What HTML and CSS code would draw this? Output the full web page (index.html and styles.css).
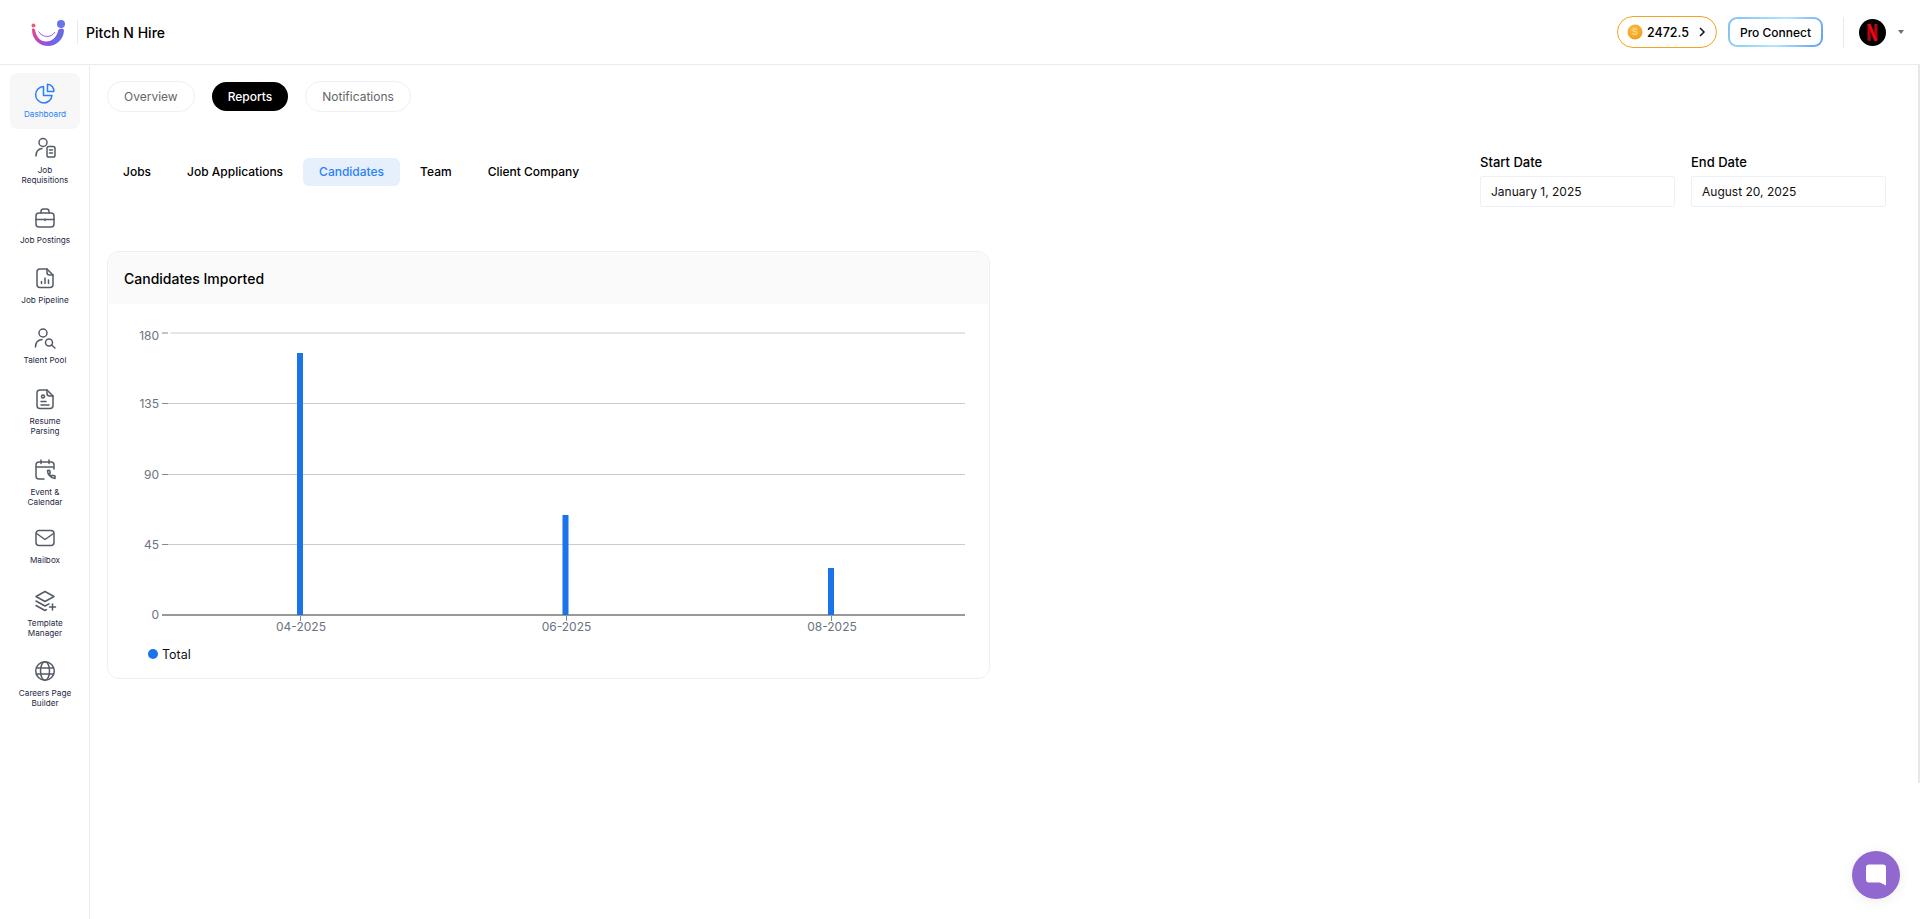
FILE: index.html
```html
<!DOCTYPE html>
<html lang="en">
<head>
<meta charset="utf-8">
<title>Pitch N Hire</title>
<link rel="stylesheet" href="styles.css">
</head>
<body>
<header class="topbar">
  <div class="brand">
    <svg class="logo" viewBox="0 0 40 32" width="40" height="32">
      <defs>
        <linearGradient id="smile" x1="0" y1="0" x2="1" y2="0.3">
          <stop offset="0" stop-color="#e8487f"/>
          <stop offset="0.5" stop-color="#a64ad8"/>
          <stop offset="1" stop-color="#5f6fe8"/>
        </linearGradient>
      </defs>
      <circle cx="4.5" cy="9.5" r="2" fill="#ee5a6f"/>
      <circle cx="32" cy="8" r="4" fill="#6a73ea"/>
      <path d="M3 13.5C3 24 11 30 19 30C27 30 34.5 24 35 14.5C35.2 12 30 11.500 29 15C27.500 21 23.500 25.500 17 25.500C11 25.500 7.500 21 6 14C5.500 12 3 12 3 13.500Z" fill="url(#smile)"/>
      <path d="M9.500 15.500C13 21.500 22 22.500 26 16" fill="none" stroke="#a35be0" stroke-width="1"/>
    </svg>
    <span class="brand-divider"></span>
    <span class="brand-name">Pitch N Hire</span>
  </div>
  <div class="top-actions">
    <button class="coins">
      <svg viewBox="0 0 16 16" width="16" height="16" class="coin-icon">
        <defs>
          <radialGradient id="coin" cx="0.4" cy="0.35" r="0.75">
            <stop offset="0" stop-color="#fbbf4a"/>
            <stop offset="1" stop-color="#f09a12"/>
          </radialGradient>
        </defs>
        <circle cx="8" cy="8" r="7.500" fill="url(#coin)"/>
        <text x="8" y="11" text-anchor="middle" class="coin-s">S</text>
      </svg>
      <span>2472.5</span>
      <svg viewBox="0 0 10 10" width="10" height="10" class="chev"><path d="M3 1l4 4-4 4" fill="none" stroke="#111" stroke-width="1.500"/></svg>
    </button>
    <button class="pro"><span class="pro-inner">Pro Connect</span></button>
    <span class="top-divider"></span>
    <svg class="avatar" viewBox="0 0 27 27" width="27" height="27">
      <circle cx="13.500" cy="13.500" r="13.500" fill="#000"/>
      <path d="M8.500 5h3.200v17l-3.200-.4zM15.300 5h3.200v16.600l-3.200.4z" fill="#b1060f"/>
      <path d="M8.500 5h3.200l6.800 16.600-3.200.4z" fill="#e50914"/>
    </svg>
    <span class="caret"></span>
  </div>
</header>

<div class="shell">
  <nav class="sidebar">
    <a class="nav-item active">
      <svg class="nav-icon" viewBox="0 0 24 24"><path d="M10.500 5.500a8.200 8.200 0 1 0 8.500 9h-8.500z"/><path d="M14.500 3.200a6.700 6.700 0 0 1 6.300 7.300h-6.300z"/></svg>
      <span>Dashboard</span>
    </a>
    <a class="nav-item">
      <svg class="nav-icon" viewBox="0 0 24 24"><circle cx="10" cy="6.500" r="4"/><path d="M3 20c0-4.500 2.500-7 6-7.500"/><rect x="14" y="10.500" width="8" height="10.500" rx="1.800"/><path d="M16.500 14h3M16.500 17h3"/></svg>
      <span>Job<br>Requisitions</span>
    </a>
    <a class="nav-item">
      <svg class="nav-icon" viewBox="0 0 24 24"><rect x="3" y="7" width="18" height="14" rx="3"/><path d="M8 7V5.500A2.500 2.500 0 0 1 10.500 3h3A2.500 2.500 0 0 1 16 5.500V7M3 13.500h18M12 13v1.500"/></svg>
      <span>Job Postings</span>
    </a>
    <a class="nav-item">
      <svg class="nav-icon" viewBox="0 0 24 24"><path d="M7 3h7l6 6v9.500a3 3 0 0 1-3 3H7a3 3 0 0 1-3-3V6a3 3 0 0 1 3-3z"/><path d="M14 3v3.500A2.500 2.500 0 0 0 16.500 9H20M8.500 17.500v-2M12 17.500V12M15.500 17.500V14"/></svg>
      <span>Job Pipeline</span>
    </a>
    <a class="nav-item">
      <svg class="nav-icon" viewBox="0 0 24 24"><circle cx="10" cy="7" r="4"/><path d="M2.500 21c0-4 2.500-7 6.500-7.500"/><circle cx="16" cy="16.500" r="3.500"/><path d="M18.500 19l3.500 3"/></svg>
      <span>Talent Pool</span>
    </a>
    <a class="nav-item">
      <svg class="nav-icon" viewBox="0 0 24 24"><path d="M7 3h7l6 6v9.500a3 3 0 0 1-3 3H7a3 3 0 0 1-3-3V6a3 3 0 0 1 3-3z"/><path d="M14 3v3.500A2.500 2.500 0 0 0 16.500 9H20M8 18h8M8 14.500h5"/><circle cx="10" cy="9.500" r="1.500"/></svg>
      <span>Resume<br>Parsing</span>
    </a>
    <a class="nav-item">
      <svg class="nav-icon" viewBox="0 0 24 24"><path d="M11 21H6a3 3 0 0 1-3-3V7a3 3 0 0 1 3-3h12a3 3 0 0 1 3 3v4M3 9h18M8 2v3.500M16 2v3.500"/><path d="M14.500 12.500c0 4 3 7.500 7.500 8v-2.500l-2.500-.8-1 1c-1-.6-1.800-1.500-2.200-2.500l1-1-.8-2.500z"/></svg>
      <span>Event &amp;<br>Calendar</span>
    </a>
    <a class="nav-item">
      <svg class="nav-icon" viewBox="0 0 24 24"><rect x="3" y="4.500" width="18" height="15" rx="3"/><path d="M3.500 7.500l8.500 6 8.500-6"/></svg>
      <span>Mailbox</span>
    </a>
    <a class="nav-item">
      <svg class="nav-icon" viewBox="0 0 24 24"><path d="M12 2.500l9 5-9 5-9-5zM3 12l9 5 4-2.200M3 16.500l9 5 1.500-.8M19.500 15v6M16.500 18h6"/></svg>
      <span>Template<br>Manager</span>
    </a>
    <a class="nav-item">
      <svg class="nav-icon" viewBox="0 0 24 24"><circle cx="12" cy="12" r="9.300"/><ellipse cx="12" cy="12" rx="4.500" ry="9.300"/><path d="M3.500 9h17M3.500 15h17"/></svg>
      <span>Careers Page<br>Builder</span>
    </a>
  </nav>

  <main class="content">
    <div class="pills">
      <a class="pill">Overview</a>
      <a class="pill selected">Reports</a>
      <a class="pill">Notifications</a>
    </div>

    <div class="filters">
      <div class="subtabs">
        <a class="subtab">Jobs</a>
        <a class="subtab">Job Applications</a>
        <a class="subtab current">Candidates</a>
        <a class="subtab">Team</a>
        <a class="subtab">Client Company</a>
      </div>
      <div class="dates">
        <div class="date-field">
          <span class="date-label">Start Date</span>
          <div class="date-input">January 1, 2025</div>
        </div>
        <div class="date-field">
          <span class="date-label">End Date</span>
          <div class="date-input">August 20, 2025</div>
        </div>
      </div>
    </div>

    <section class="card">
      <h2 class="card-title">Candidates Imported</h2>
      <svg class="chart" viewBox="0 0 881 374" width="881" height="374">
        <g class="grid">
          <path d="M62.500 29H857"/>
          <path d="M54 99.500H857"/>
          <path d="M54 170.500H857"/>
          <path d="M54 240.500H857"/>
        </g>
        <g class="ticks">
          <path d="M54 29h6M54 99.500h6M54 170.500h6M54 240.500h6"/>
          <path d="M192.500 311v6M458.500 311v6M723.500 311v6"/>
        </g>
        <path class="baseline" d="M54 311H857"/>
        <g class="bars">
          <rect x="189" y="49" width="6" height="262"/>
          <rect x="454.500" y="211" width="6" height="100"/>
          <rect x="720" y="264" width="6" height="47"/>
        </g>
        <g class="y-labels">
          <text x="51" y="36">180</text>
          <text x="51" y="103.500">135</text>
          <text x="51" y="174.500">90</text>
          <text x="51" y="245">45</text>
          <text x="51" y="315">0</text>
        </g>
        <g class="x-labels">
          <text x="193" y="327">04-2025</text>
          <text x="458.500" y="327">06-2025</text>
          <text x="724" y="327">08-2025</text>
        </g>
        <circle class="legend-dot" cx="45" cy="350" r="5"/>
        <text class="legend-text" x="54" y="354.500">Total</text>
      </svg>
    </section>
  </main>
</div>

<span class="scroll-thumb"></span>
<button class="chat" aria-label="Chat">
  <svg viewBox="0 0 24 24" width="24" height="24"><path d="M5 1.500h14a3 3 0 0 1 3 3v18l-6-3H5a3 3 0 0 1-3-3v-12a3 3 0 0 1 3-3z" fill="#fff"/></svg>
</button>
</body>
</html>
```

FILE: styles.css
```css
* { box-sizing: border-box; }
html, body { height: 100%; }
body {
  margin: 0;
  overflow: hidden;
  background: #fff;
  color: #000;
  font-family: Inter, "Liberation Sans", sans-serif;
}
button { font-family: inherit; cursor: pointer; }

.topbar {
  height: 65px;
  display: flex;
  align-items: center;
  justify-content: space-between;
  border-bottom: 1px solid #eaebf2;
}
.brand { display: flex; align-items: center; padding-left: 29px; }
.logo { display: block; margin-right: 8px; }
.brand-divider { width: 1px; height: 24px; background: #e8e8ee; margin-right: 8px; }
.brand-name { font-size: 14px; font-weight: 500; }

.top-actions { display: flex; align-items: center; padding-right: 15.500px; }
.coins {
  width: 100px;
  height: 32px;
  display: flex;
  align-items: center;
  padding: 0 0 0 9px;
  background: #fff;
  border: 1px solid #f3a41e;
  border-radius: 16px;
  font-size: 12.500px;
  font-weight: 500;
  color: #000;
}
.coin-icon { margin-right: 4px; flex: none; }
.coin-s { font-size: 9px; font-weight: 600; fill: #fcd98a; font-family: Inter, sans-serif; }
.chev { margin-left: 8px; }
.pro {
  margin-left: 11px;
  width: 95px;
  height: 30px;
  padding: 2px;
  border: 0;
  border-radius: 9px;
  background: linear-gradient(115deg, #7cc0f5 0%, #b5e6fb 55%, #5a9df5 100%);
}
.pro-inner {
  display: flex;
  align-items: center;
  justify-content: center;
  height: 100%;
  background: #fff;
  border-radius: 7px;
  font-size: 12px;
  font-weight: 500;
  color: #000;
}
.top-divider { width: 1px; height: 31px; background: #e8e8ee; margin: 0 15px 0 20px; }
.avatar { display: block; }
.caret {
  margin-left: 11.500px;
  margin-right: 1px;
  width: 0;
  height: 0;
  border-left: 3.500px solid transparent;
  border-right: 3.500px solid transparent;
  border-top: 4px solid #6b6f7a;
}

.shell { display: flex; height: 854px; }
.sidebar {
  width: 90px;
  flex: none;
  border-right: 1px solid #eaebf2;
  padding: 8px 9px 0 10px;
  display: grid;
  grid-template-rows: 55px 70px 60px 60px 61px 71px 68px 63px 70px 60px;
  align-content: start;
}
.nav-item {
  display: flex;
  flex-direction: column;
  align-items: center;
  padding-top: 8px;
  font-size: 8.200px;
  line-height: 10px;
  font-weight: 400;
  text-align: center;
  color: #1f2a44;
  min-width: 0;
  white-space: nowrap;
}
.nav-item span { margin-top: 5px; }
.nav-item.active {
  height: 56px;
  background: #f7f7f8;
  border-radius: 8px;
  color: #2b7fff;
}
.nav-item.active span { margin-top: 4px; }
.nav-icon {
  width: 24px;
  height: 24px;
  flex: none;
  fill: none;
  stroke: #555b66;
  stroke-width: 1.500;
  stroke-linecap: round;
  stroke-linejoin: round;
}
.active .nav-icon { stroke: #2b7fff; }

.content { flex: 1; min-width: 0; padding: 16px 34px 0 17px; }
.pills { display: flex; align-items: center; gap: 17px; }
.pill {
  height: 31px;
  display: flex;
  align-items: center;
  padding: 0 16px;
  border: 1px solid #f0f0f2;
  border-radius: 16px;
  font-size: 12px;
  color: #666;
}
.pill.selected {
  height: 29px;
  border: 0;
  background: #000;
  color: #fff;
  font-weight: 500;
}

.filters {
  display: flex;
  justify-content: space-between;
  align-items: flex-start;
  margin-top: 42px;
}
.subtabs { display: flex; align-items: center; margin-top: 4px; gap: 4px; }
.subtab {
  height: 28px;
  display: flex;
  align-items: center;
  padding: 0 16px 1px;
  border-radius: 6px;
  font-size: 12px;
  font-weight: 500;
  color: #000;
}
.subtab.current { background: #e6f0fd; color: #2b7fff; }
.dates { display: flex; gap: 16px; }
.date-field { width: 195px; display: flex; flex-direction: column; }
.date-label { font-size: 13px; font-weight: 500; line-height: 16px; margin-bottom: 6px; }
.date-input {
  height: 31px;
  display: flex;
  align-items: center;
  padding: 0 10px;
  border: 1px solid #eef0f6;
  border-radius: 2px;
  font-size: 12px;
  color: #111;
}

.card {
  width: 883px;
  height: 428px;
  margin-top: 44px;
  border: 1px solid #eeeff4;
  border-radius: 12px;
  overflow: hidden;
}
.card-title {
  margin: 0;
  height: 52px;
  display: flex;
  align-items: center;
  padding-left: 16px;
  background: #fafafa;
  font-size: 14px;
  font-weight: 500;
}
.chart { display: block; }
.chart text { font-family: Inter, sans-serif; font-size: 12px; fill: #6b7280; }
.grid path { stroke: #cccccc; stroke-width: 1; fill: none; }
.ticks path { stroke: #888; stroke-width: 1; fill: none; }
.baseline { stroke: #999; stroke-width: 2; fill: none; }
.bars rect { fill: #1a73e8; }
.y-labels text { text-anchor: end; }
.x-labels text { text-anchor: middle; }
.legend-dot { fill: #1a73e8; }
.chart .legend-text { fill: #111; font-size: 12.500px; }

.scroll-thumb {
  position: absolute;
  top: 65px;
  right: 0;
  width: 2px;
  height: 718px;
  background: #e8e8e8;
}
.chat {
  position: fixed;
  left: 1852px;
  top: 851px;
  width: 48px;
  height: 48px;
  display: flex;
  align-items: center;
  justify-content: center;
  padding: 0;
  border: 0;
  border-radius: 50%;
  background: #9068cf;
  box-shadow: 0 2px 12px rgba(0, 0, 0, 0.08);
}
```
